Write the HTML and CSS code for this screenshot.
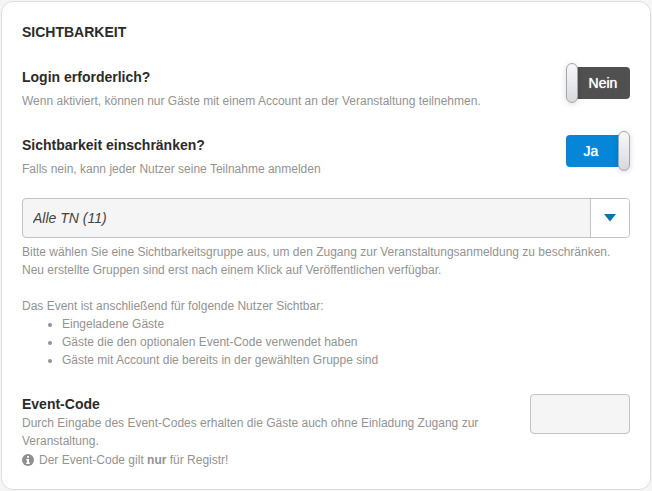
FILE: index.html
```html
<!DOCTYPE html>
<html lang="de">
<head>
  <meta charset="UTF-8">
  <meta name="viewport" content="width=device-width, initial-scale=1.0">
  <title>Sichtbarkeit</title>
  <link rel="stylesheet" href="styles.css">
</head>
<body>
  <form class="card">
    <h2>SICHTBARKEIT</h2>

    <div class="row">
      <div class="text">
        <label class="title" for="loginRequired">Login erforderlich?</label>
        <p>Wenn aktiviert, können nur Gäste mit einem Account an der Veranstaltung teilnehmen.</p>
      </div>
      <label class="switch">
        <input type="checkbox" id="loginRequired">
        <span class="off">Nein</span>
        <span class="on">Ja</span>
        <span class="handle"></span>
      </label>
    </div>

    <div class="row">
      <div class="text">
        <label class="title" for="restrictVisibility">Sichtbarkeit einschränken?</label>
        <p>Falls nein, kann jeder Nutzer seine Teilnahme anmelden</p>
      </div>
      <label class="switch">
        <input type="checkbox" id="restrictVisibility" checked>
        <span class="off">Nein</span>
        <span class="on">Ja</span>
        <span class="handle"></span>
      </label>
    </div>

    <div class="group">
      <div class="select">
        <select id="groupSelect" aria-label="Sichtbarkeitsgruppe">
          <option>Alle TN (11)</option>
        </select>
        <span class="arrow">
          <svg width="12" height="8" viewBox="0 0 12 8"><path d="M0 0h12L6 7.500z" fill="#0e74a5"/></svg>
        </span>
      </div>
      <p>Bitte wählen Sie eine Sichtbarkeitsgruppe aus, um den Zugang zur Veranstaltungsanmeldung zu beschränken. Neu erstellte Gruppen sind erst nach einem Klick auf Veröffentlichen verfügbar.</p>
      <p class="list-intro">Das Event ist anschließend für folgende Nutzer Sichtbar:</p>
      <ul>
        <li>Eingeladene Gäste</li>
        <li>Gäste die den optionalen Event-Code verwendet haben</li>
        <li>Gäste mit Account die bereits in der gewählten Gruppe sind</li>
      </ul>
    </div>

    <div class="row code-row">
      <div class="text">
        <label class="title" for="eventCode">Event-Code</label>
        <p>Durch Eingabe des Event-Codes erhalten die Gäste auch ohne Einladung Zugang zur Veranstaltung.</p>
        <p class="info">
          <svg width="12" height="12" viewBox="0 0 12 12">
            <circle cx="6" cy="6" r="6" fill="#8f8f8f"/>
            <path d="M5 2h2v1.700H5zM4.200 5H7v3.600h.8V10H4.200V8.600H5V6.300h-.8z" fill="#fff"/>
          </svg>
          <span>Der Event-Code gilt <b>nur</b> für Registr!</span>
        </p>
      </div>
      <input type="text" id="eventCode" class="code">
    </div>
  </form>
</body>
</html>
```
FILE: styles.css
```css
* {
  box-sizing: border-box;
}

body {
  margin: 1px;
  background-color: #f5f5f5;
  font-family: "Liberation Sans", Arial, sans-serif;
  font-size: 12px;
  line-height: 18px;
  color: #939393;
}

.card {
  background-color: #fff;
  border: 1px solid #dedede;
  border-radius: 12px;
  padding: 20px;
}

h2, p, ul {
  margin: 0;
}

h2, .title {
  display: block;
  font-size: 14px;
  font-weight: bold;
  line-height: 20px;
  color: #2b2b2b;
}

h2 {
  margin-bottom: 25px;
}

.row {
  display: flex;
  justify-content: space-between;
  align-items: flex-start;
  margin-bottom: 25px;
}

.row .title {
  margin-bottom: 5px;
}

/* Ja / Nein switch */
.switch {
  position: relative;
  flex: none;
  width: 64px;
  height: 32px;
  font-size: 14px;
  line-height: 32px;
  color: #fff;
  text-align: center;
  cursor: pointer;
}

.switch input {
  position: absolute;
  inset: 0;
  margin: 0;
  opacity: 0;
}

.on, .off {
  display: block;
  border-radius: 4px;
  text-shadow: 0 0 1px #fff;
}

.off {
  background-color: #505050;
  padding-left: 10px;
}

.on {
  display: none;
  background-color: #0586d8;
  padding-right: 14px;
}

.handle {
  position: absolute;
  top: -4px;
  left: 0;
  width: 12px;
  height: 40px;
  border: 1px solid #a5a5aa;
  border-radius: 6px;
  background: linear-gradient(#f8f8fa, #d8d9df);
  box-shadow: 0 1px 6px rgba(0, 0, 0, 0.15);
}

.switch input:checked ~ .off {
  display: none;
}

.switch input:checked ~ .on {
  display: block;
}

.switch input:checked ~ .handle {
  left: auto;
  right: 0;
}

.group {
  margin-top: -5px;
  margin-bottom: 25px;
}

.select {
  position: relative;
  margin-bottom: 5px;
}

select, .code {
  display: block;
  height: 40px;
  border: 1px solid #c2c2c2;
  border-radius: 4px;
  background-color: #f5f5f5;
  padding: 0 10px;
  font-family: inherit;
  font-size: 14px;
  color: #444;
}

select {
  appearance: none;
  width: 100%;
  font-style: italic;
}

.arrow {
  position: absolute;
  top: 1px;
  right: 1px;
  bottom: 1px;
  width: 39px;
  display: flex;
  align-items: center;
  justify-content: center;
  border-left: 1px solid #c2c2c2;
  border-radius: 0 3px 3px 0;
  background-color: #fff;
  pointer-events: none;
}

.list-intro {
  margin-top: 18px;
}

ul {
  padding-left: 40px;
}

.code-row {
  gap: 40px;
  margin-bottom: 0;
}

.code-row .title {
  margin-bottom: 0;
}

.info {
  display: flex;
  align-items: center;
  gap: 5px;
  margin-top: 1px;
}

.code {
  flex: none;
  width: 100px;
}
```
